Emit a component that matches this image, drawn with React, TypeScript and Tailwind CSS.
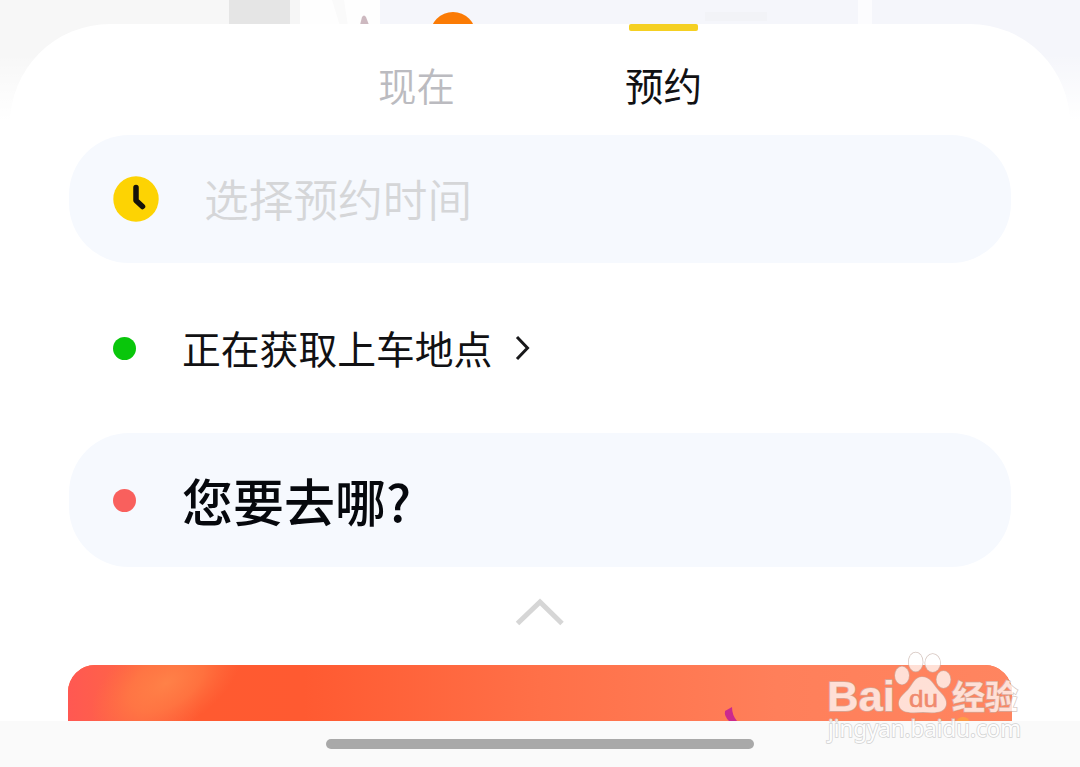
import type { ReactNode } from "react";

const tabs = [
  { id: "now", label: "现在" },
  { id: "reserve", label: "预约" },
];

const activeTab = "reserve";

function MapStrip() {
  return (
    <svg
      className="absolute top-0 left-0"
      width="1080"
      height="120"
      viewBox="0 0 1080 120"
    >
      <defs>
        <linearGradient id="edge" x1="0" x2="0" y1="0" y2="1">
          <stop offset="0.3" stopColor="#ffffff" stopOpacity="0" />
          <stop offset="1" stopColor="#ffffff" />
        </linearGradient>
      </defs>
      <rect width="1080" height="120" fill="#f7f7f7" />
      <rect x="380" width="700" height="120" fill="#f5f6fb" />
      <rect x="300" width="80" height="30" fill="#fefefe" />
      <rect x="229" width="61" height="30" fill="#e5e5e5" />
      <rect x="290" width="10" height="30" fill="#f6f6f6" />
      <path d="M332 0h12l4 26h-8z" fill="#fafafa" />
      <path d="M360 25l2-8q2-3 4 0l3 8z" fill="#cdb9c0" />
      <rect x="705" y="12" width="62" height="9" fill="#f2f3f7" />
      <path d="M858 0h14v26h-14z" fill="#fcfcfe" />
      <circle cx="453" cy="35" r="23" fill="#fb7b05" />
      <rect y="25" width="1080" height="95" fill="url(#edge)" />
    </svg>
  );
}

function Field({ children }: { children: ReactNode }) {
  return (
    <div className="mx-[69px] flex items-center rounded-[60px] bg-[#f6f9fe] pl-11">
      {children}
    </div>
  );
}

function ClockIcon() {
  return (
    <svg width="46" height="46" viewBox="0 0 46 46" className="shrink-0">
      <circle cx="23" cy="23" r="22.7" fill="#fdd303" />
      <path
        d="M23 11.500v13l6.500 6"
        fill="none"
        stroke="#15120a"
        strokeWidth="5.500"
        strokeLinecap="round"
        strokeLinejoin="round"
      />
    </svg>
  );
}

function Banner() {
  return (
    <div className="mx-[68px] h-[56px] overflow-hidden rounded-t-[27px] bg-[#ff6338]">
      <svg width="944" height="56" viewBox="0 0 944 56" className="block">
        <defs>
          <linearGradient id="base" x1="0" x2="1" y1="0" y2="0">
            <stop offset="0" stopColor="#ff5852" />
            <stop offset="0.08" stopColor="#ff6843" />
            <stop offset="0.14" stopColor="#ff5a30" />
            <stop offset="0.25" stopColor="#ff5a31" />
            <stop offset="0.5" stopColor="#ff7048" />
            <stop offset="0.75" stopColor="#ff7f5a" />
            <stop offset="1" stopColor="#ff8560" />
          </linearGradient>
          <radialGradient id="glow">
            <stop offset="0" stopColor="#ff8148" />
            <stop offset="0.5" stopColor="#ff7b44" stopOpacity="0.7" />
            <stop offset="1" stopColor="#ff7040" stopOpacity="0" />
          </radialGradient>
        </defs>
        <rect width="944" height="56" fill="url(#base)" />
        <ellipse
          cx="98"
          cy="18"
          rx="82"
          ry="46"
          fill="url(#glow)"
          transform="rotate(-30 98 18)"
        />
        <path d="M657 46l7-4q0 8 5 14h-8q-5-5-4-10z" fill="#cb2a8e" />
        <ellipse cx="895" cy="56" rx="6" ry="4" fill="#ff9d48" />
      </svg>
    </div>
  );
}

function Watermark() {
  return (
    <svg
      className="absolute top-[645px] left-[820px]"
      width="215"
      height="110"
      viewBox="0 0 215 110"
    >
      {/* Solid shapes, faded as a group so the outlines stay outside */}
      <g
        fill="#ffffff"
        stroke="#c9b3ab"
        strokeWidth="1.500"
        paintOrder="stroke"
        opacity="0.75"
      >
        <text
          x="7"
          y="66"
          fontFamily="Liberation Sans, sans-serif"
          fontSize="43"
          fontWeight="700"
          textLength="68"
          lengthAdjust="spacingAndGlyphs"
        >
          Bai
        </text>
        <ellipse cx="82" cy="30.500" rx="7" ry="9" />
        <ellipse cx="95.700" cy="17" rx="7" ry="9.500" />
        <ellipse cx="112.700" cy="18" rx="7.500" ry="9" />
        <ellipse cx="123.500" cy="34.500" rx="7" ry="8.500" />
        <path d="M102 32c8 0 11 7 16 13 6 6 9 10 8 15-2 8-11 8-23 7-13 1-22 1-24-7-1-6 3-9 9-15 5-6 7-13 14-13z" />
        <text
          x="132"
          y="64"
          fontFamily="Noto Sans CJK SC, sans-serif"
          fontSize="33"
          fontWeight="700"
          textLength="66"
          lengthAdjust="spacingAndGlyphs"
        >
          经验
        </text>
        <text
          x="8"
          y="92"
          fontFamily="Noto Sans, sans-serif"
          fontSize="23"
          textLength="193"
          lengthAdjust="spacingAndGlyphs"
          stroke="#c4c4c4"
        >
          jingyan.baidu.com
        </text>
      </g>
      <text
        x="89"
        y="62"
        fill="#f08a6e"
        fontFamily="Liberation Sans, sans-serif"
        fontSize="24"
        textLength="29"
        lengthAdjust="spacingAndGlyphs"
        stroke="#f08a6e"
        strokeWidth="0.600"
      >
        du
      </text>
    </svg>
  );
}

export default function App() {
  return (
    <div className="relative h-[767px] w-[1080px] overflow-hidden bg-white font-['Noto_Sans_CJK_SC',sans-serif] text-[#111113]">
      <MapStrip />

      {/* Booking sheet */}
      <div className="relative mt-6 flex h-[743px] flex-col">
        <div className="flex h-[697px] flex-col">
          <div className="mx-[10px] flex h-[111px] justify-center gap-[170px] rounded-t-[100px] bg-white">
            {tabs.map((tab) => (
              <button
                key={tab.id}
                className={`flex w-[77px] flex-col items-center text-[38.500px] leading-[56px] ${
                  tab.id === activeTab
                    ? "text-[#111113]"
                    : "font-[350] text-[#bbbbc0]"
                }`}
              >
                <span
                  className={`mb-[25px] h-[7px] w-[69px] shrink-0 rounded-[2px] ${
                    tab.id === activeTab ? "bg-[#f5d022]" : ""
                  }`}
                />
                <span className="whitespace-nowrap">{tab.label}</span>
              </button>
            ))}
          </div>

          <Field>
            <div className="flex h-[128px] items-center">
              <ClockIcon />
              <span className="mb-[2px] ml-[45px] text-[44.700px] leading-[64px] font-[350] text-[#d5d6d8]">
                选择预约时间
              </span>
            </div>
          </Field>

          <div className="flex h-[170px] items-center pl-[113px]">
            <span className="size-[23px] rounded-full bg-[#09c60b]" />
            <span className="mb-[2px] ml-[46px] text-[38.800px] leading-[56px]">
              正在获取上车地点
            </span>
            <svg width="18" height="28" viewBox="0 0 18 28" className="ml-[21px]">
              <path
                d="M4 3l10.500 11L4 25"
                fill="none"
                stroke="#18181a"
                strokeWidth="3"
              />
            </svg>
          </div>

          <Field>
            <div className="flex h-[134px] items-center">
              <span className="size-[23px] rounded-full bg-[#f9605d]" />
              <span className="ml-[46px] text-[51px] leading-[72px] font-medium text-[#06080d]">
                您要去哪?
              </span>
            </div>
          </Field>

          <div className="flex h-[98px] shrink-0 justify-center pt-[29px]">
            <svg width="50" height="30" viewBox="0 0 50 30">
              <path
                d="M2.500 27.500L25 6l22 21.500"
                fill="none"
                stroke="#d6d6d6"
                strokeWidth="5"
              />
            </svg>
          </div>

          <Banner />
        </div>

        {/* Home indicator */}
        <div className="flex flex-1 justify-center bg-[#fafafa] pt-[18px]">
          <div className="h-[10px] w-[428px] rounded-full bg-[#a9a9a9]" />
        </div>
      </div>

      <Watermark />
    </div>
  );
}
